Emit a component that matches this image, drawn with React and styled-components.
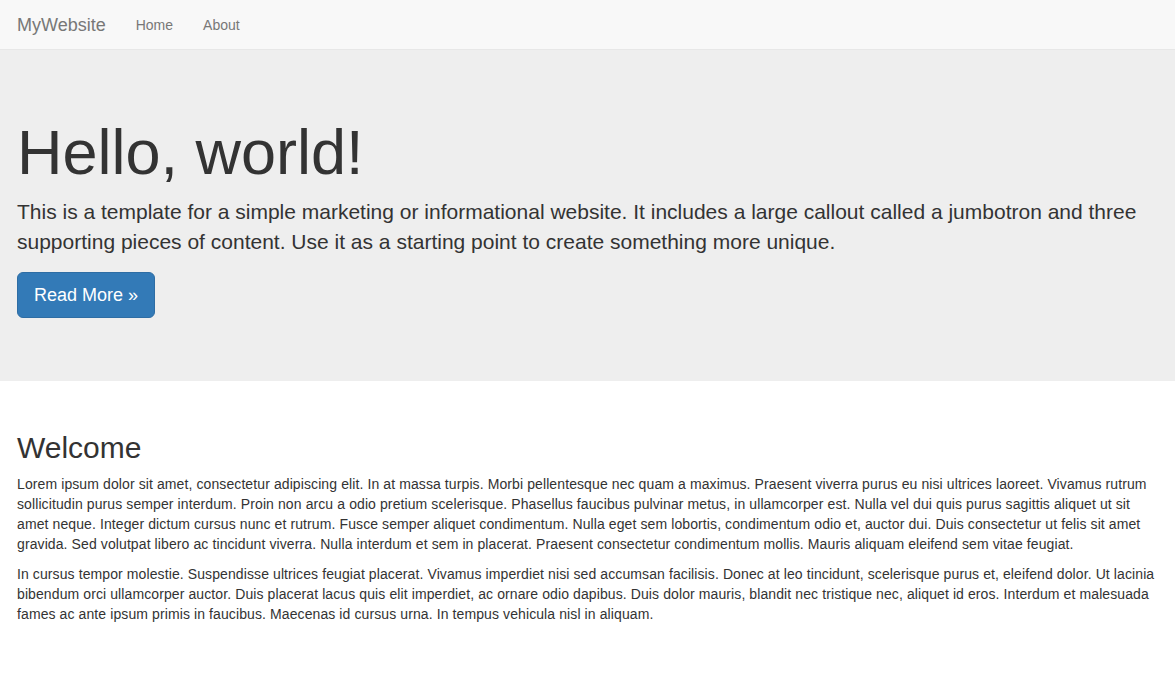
import styled, { createGlobalStyle } from "styled-components";

const GlobalStyle = createGlobalStyle`
  html, body {
    margin: 0;
    padding: 0;
  }
  body {
    font-family: "Liberation Sans", Arial, Helvetica, sans-serif;
    font-size: 14px;
    line-height: 1.42857143;
    color: #333;
    background: #fff;
  }
  * {
    box-sizing: border-box;
  }
`;

const Navbar = styled.nav`
  height: 50px;
  background-color: #f8f8f8;
  border-bottom: 1px solid #e7e7e7;
`;

const NavContainer = styled.div`
  display: flex;
  align-items: center;
  height: 49px;
  padding: 0 17px;
`;

const Brand = styled.a`
  font-size: 18px;
  line-height: 20px;
  color: #777;
  text-decoration: none;
  padding: 15px 15px 15px 0;
`;

const NavLink = styled.a`
  font-size: 14px;
  line-height: 20px;
  color: #777;
  text-decoration: none;
  padding: 15px;
`;

const Jumbotron = styled.div`
  background-color: #eee;
  padding: 48px 0;
  margin-bottom: 50px;
`;

const Container = styled.div`
  padding: 0 17px;
`;

const Title = styled.h1`
  font-size: 63px;
  font-weight: 500;
  line-height: 1.1;
  margin: 20px 0 10px;
  color: #333;
`;

const Lead = styled.p`
  font-size: 21px;
  line-height: 30px;
  margin: 0 0 15px;
`;

const Button = styled.a`
  display: inline-block;
  padding: 10px 16px;
  font-size: 18px;
  line-height: 24px;
  border-radius: 6px;
  color: #fff;
  background-color: #337ab7;
  border: 1px solid #2e6da4;
  text-decoration: none;
  vertical-align: middle;
`;

const Heading = styled.h2`
  font-size: 30px;
  font-weight: 500;
  line-height: 1.1;
  margin: 20px 0 10px;
`;

const Text = styled.p`
  margin: 0 0 10px;
  letter-spacing: 0.1px;
`;

export default function App() {
  return (
    <>
      <GlobalStyle />
      <Navbar>
        <NavContainer>
          <Brand href="#">MyWebsite</Brand>
          <NavLink href="#">Home</NavLink>
          <NavLink href="#">About</NavLink>
        </NavContainer>
      </Navbar>
      <Jumbotron>
        <Container>
          <Title>Hello, world!</Title>
          <Lead>
            This is a template for a simple marketing or informational website. It includes a large callout called a jumbotron and three supporting pieces of content. Use it as a starting point to create something more unique.
          </Lead>
          <Lead>
            <Button href="#">Read More »</Button>
          </Lead>
        </Container>
      </Jumbotron>
      <Container>
        <Heading>Welcome</Heading>
        <Text>
          Lorem ipsum dolor sit amet, consectetur adipiscing elit. In at massa turpis. Morbi pellentesque nec quam a maximus. Praesent viverra purus eu nisi ultrices laoreet. Vivamus rutrum sollicitudin purus semper interdum. Proin non arcu a odio pretium scelerisque. Phasellus faucibus pulvinar metus, in ullamcorper est. Nulla vel dui quis purus sagittis aliquet ut sit amet neque. Integer dictum cursus nunc et rutrum. Fusce semper aliquet condimentum. Nulla eget sem lobortis, condimentum odio et, auctor dui. Duis consectetur ut felis sit amet gravida. Sed volutpat libero ac tincidunt viverra. Nulla interdum et sem in placerat. Praesent consectetur condimentum mollis. Mauris aliquam eleifend sem vitae feugiat.
        </Text>
        <Text>
          In cursus tempor molestie. Suspendisse ultrices feugiat placerat. Vivamus imperdiet nisi sed accumsan facilisis. Donec at leo tincidunt, scelerisque purus et, eleifend dolor. Ut lacinia bibendum orci ullamcorper auctor. Duis placerat lacus quis elit imperdiet, ac ornare odio dapibus. Duis dolor mauris, blandit nec tristique nec, aliquet id eros. Interdum et malesuada fames ac ante ipsum primis in faucibus. Maecenas id cursus urna. In tempus vehicula nisl in aliquam.
        </Text>
      </Container>
    </>
  );
}
